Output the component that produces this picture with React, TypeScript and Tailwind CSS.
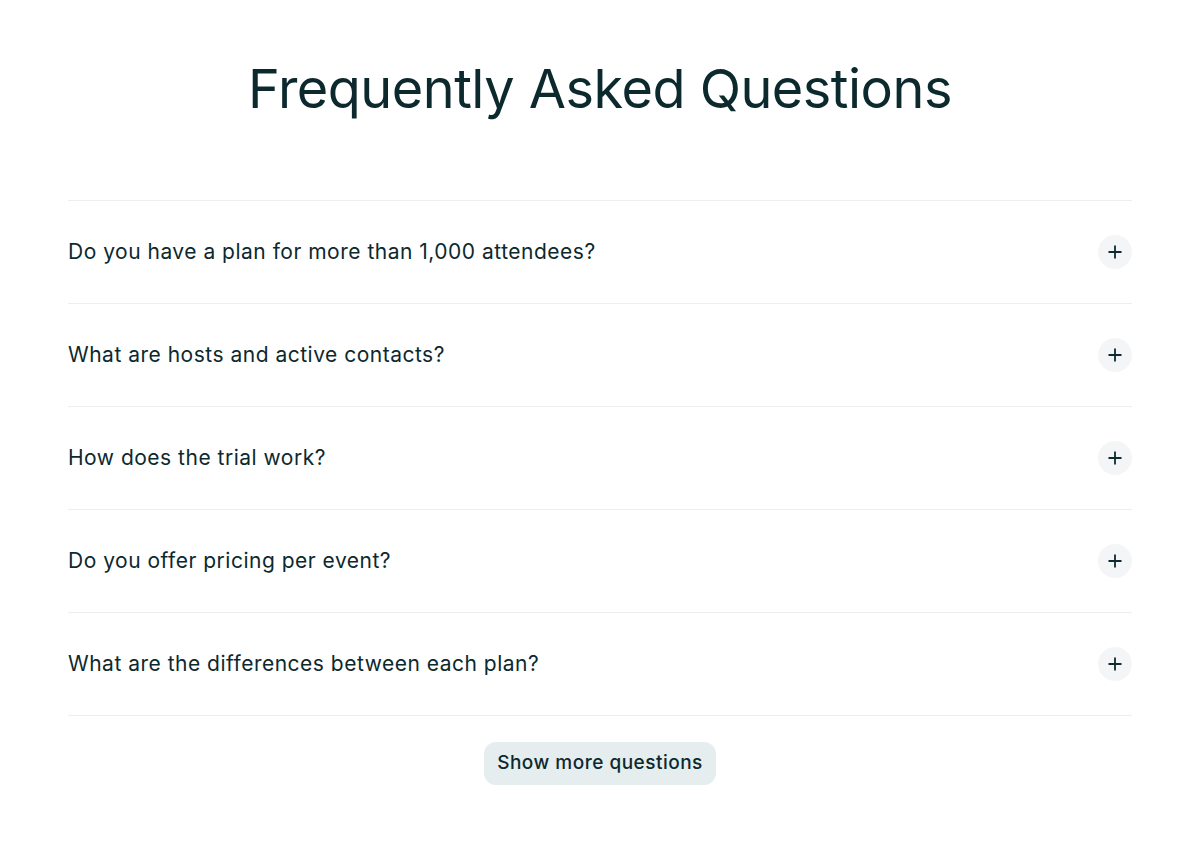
const QUESTIONS = [
  'Do you have a plan for more than 1,000 attendees?',
  'What are hosts and active contacts?',
  'How does the trial work?',
  'Do you offer pricing per event?',
  'What are the differences between each plan?',
];

function PlusIcon() {
  return (
    <svg width="14" height="14" viewBox="0 0 14 14" fill="none">
      <path d="M7 0.5v13M0.5 7h13" stroke="#0d2b30" strokeWidth="1.8" />
    </svg>
  );
}

export default function App() {
  return (
    <div
      className="min-h-screen bg-white text-[#0c292e]"
      style={{ fontFamily: 'Inter, "Liberation Sans", sans-serif' }}
    >
      <div className="px-[68px] pt-[57px]">
        <h1 className="text-center text-[54px] leading-[64px] font-normal tracking-[-0.5px]">
          Frequently Asked Questions
        </h1>
        <div className="mt-[79px] border-t border-[#eceeef]">
          {QUESTIONS.map(q => (
            <div
              key={q}
              className="h-[103px] border-b border-[#eceeef] flex items-center justify-between"
            >
              <span className="text-[21px] tracking-[0.5px]">{q}</span>
              <button className="w-[34px] h-[34px] rounded-full bg-[#f3f5f6] flex items-center justify-center">
                <PlusIcon />
              </button>
            </div>
          ))}
        </div>
        <div className="flex justify-center mt-[26px]">
          <button className="h-[43px] px-[13px] rounded-[12px] bg-[#e6edef] text-[19px] font-medium tracking-[0.5px]">
            Show more questions
          </button>
        </div>
      </div>
    </div>
  );
}
